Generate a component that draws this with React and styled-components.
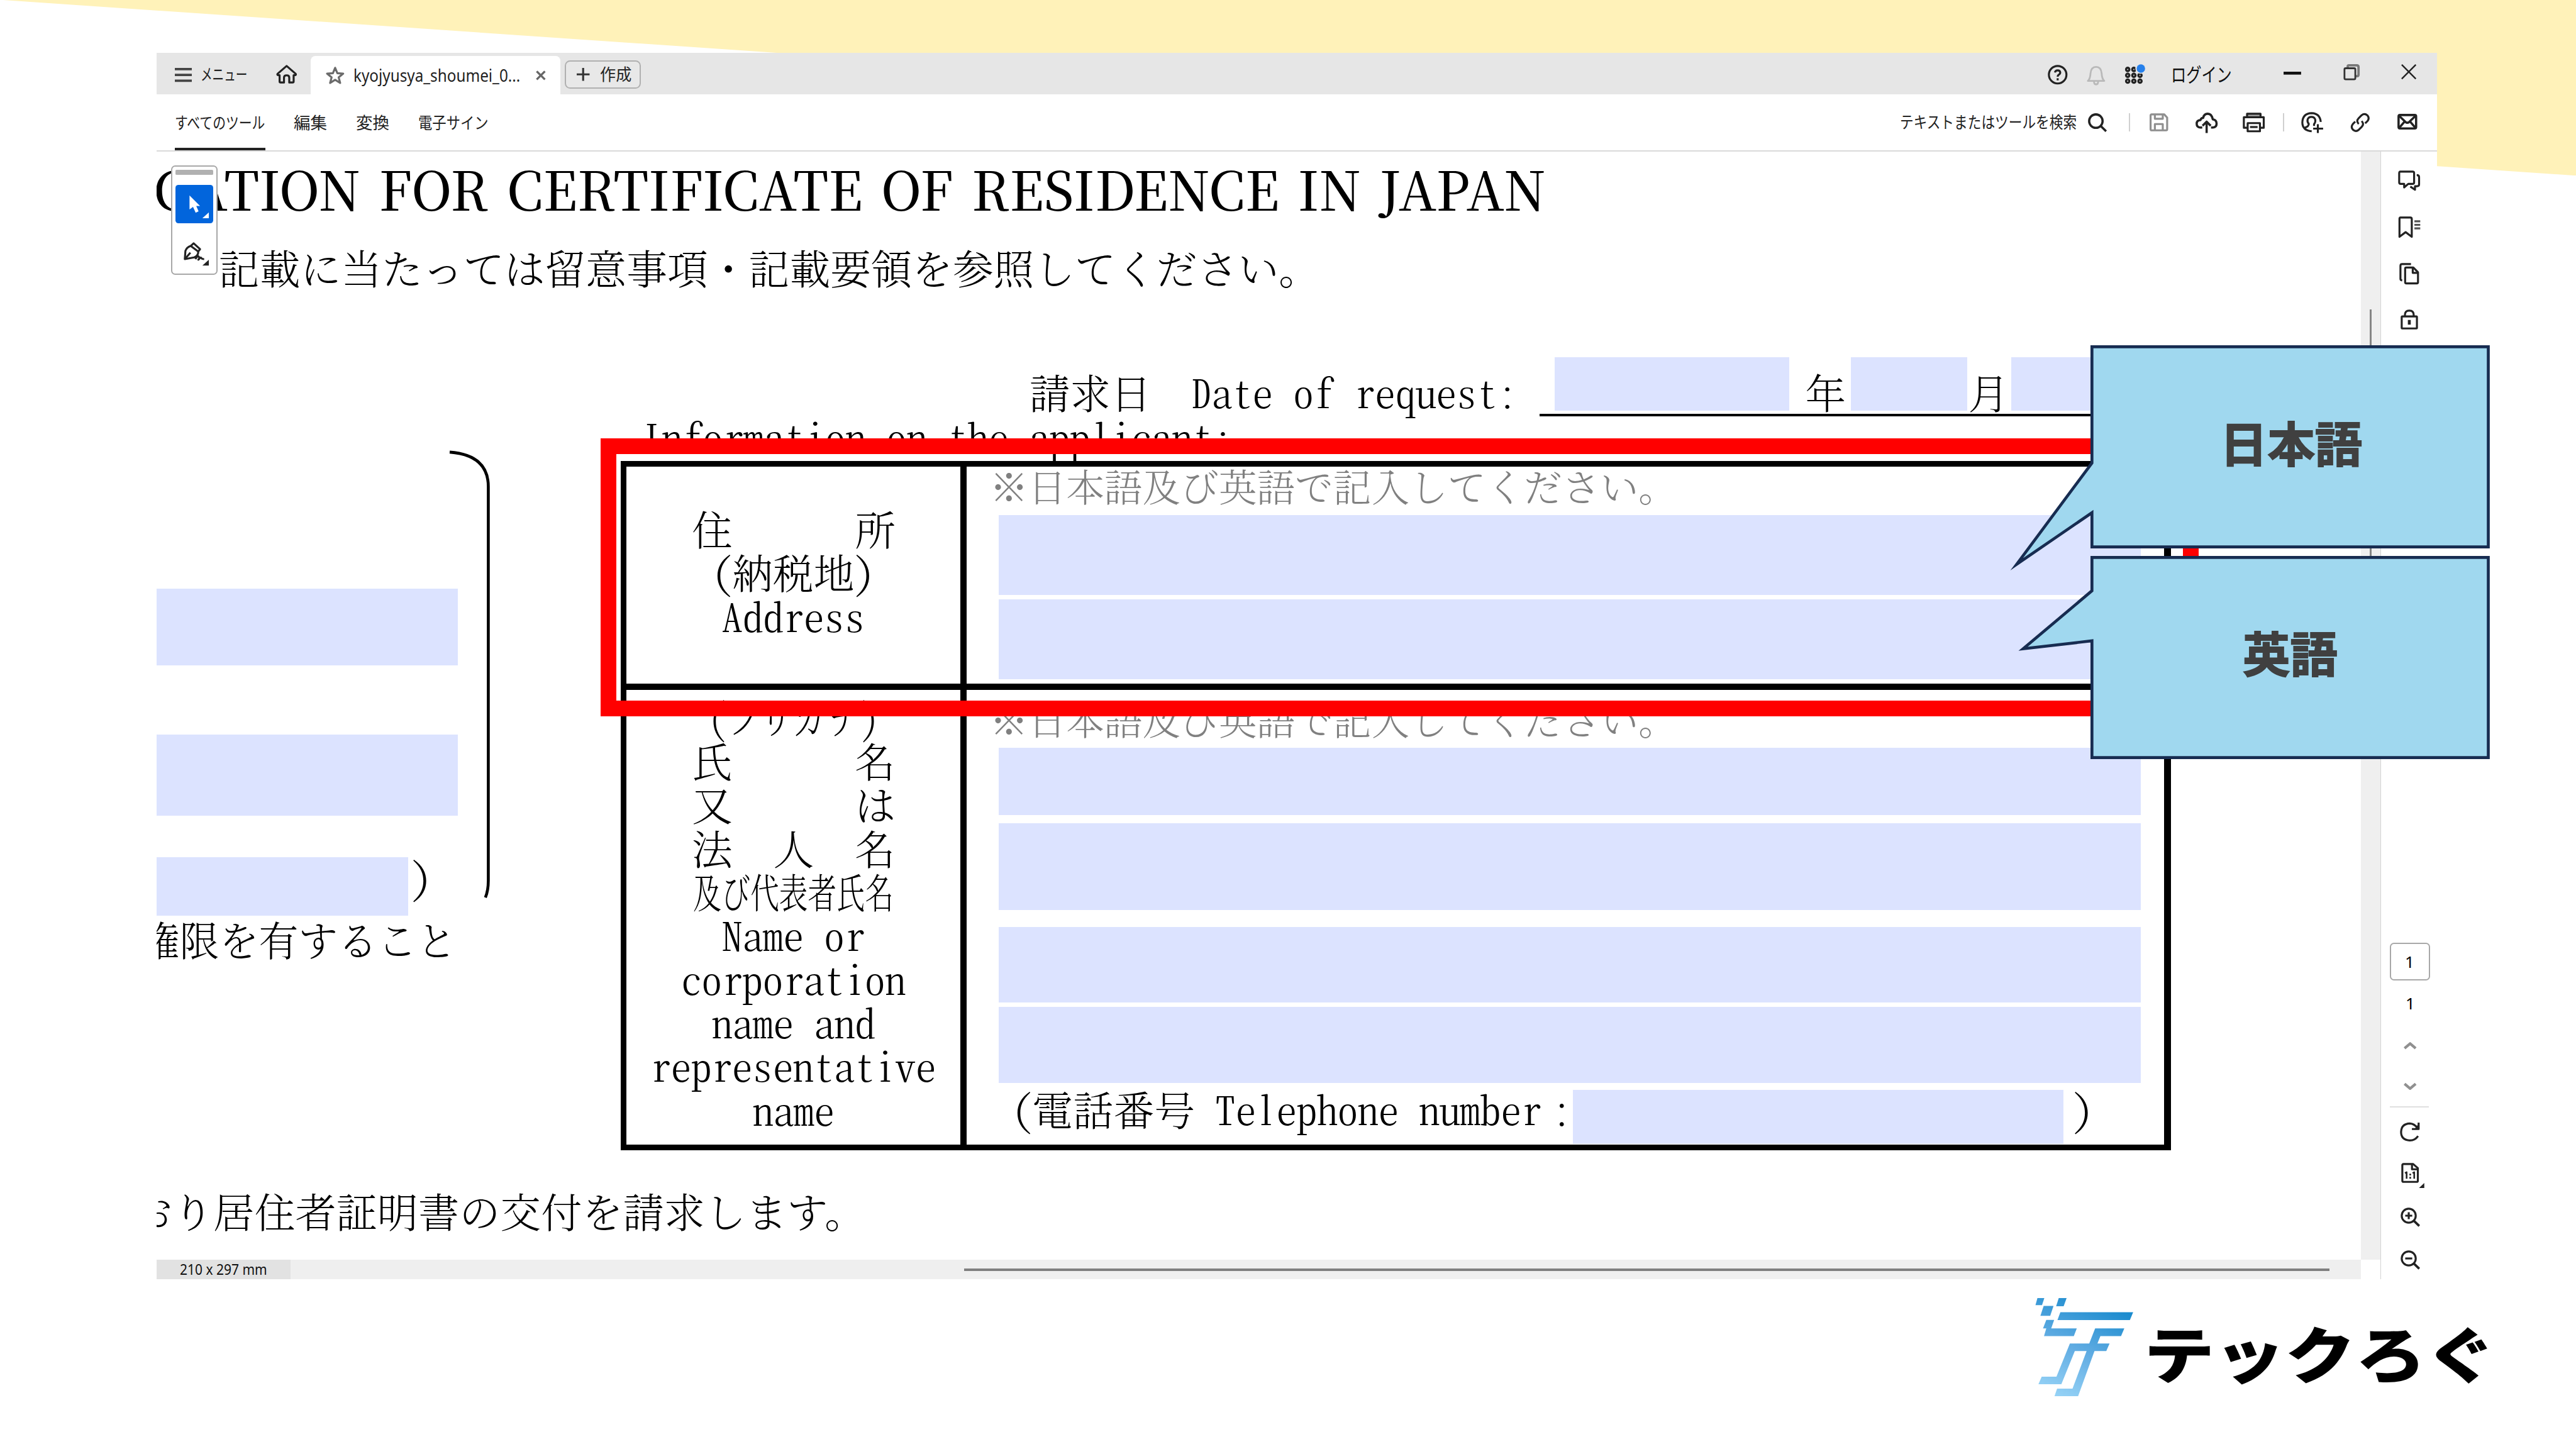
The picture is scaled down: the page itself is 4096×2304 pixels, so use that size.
import { useLayoutEffect, useRef, useState } from 'react';
import styled, { createGlobalStyle } from 'styled-components';

const MINCHO = '"Noto Serif CJK JP", "Noto Sans CJK JP", serif';
const GOTHIC = '"Noto Sans CJK JP", sans-serif';
const LATIN = '"Noto Sans", "Noto Sans CJK JP", sans-serif';

const GlobalStyle = createGlobalStyle`
    * {
        box-sizing: border-box;
    }
    body {
        margin: 0;
        background: #fff;
        overflow: hidden;
    }
`

/* slide is designed on a 4400 x 2475 board */
const Slide = styled.main`
    position: relative;
    display: flex;
    flex-direction: column;
    width: 4400px;
    height: 2475px;
    padding: 90px 0 0 267px;
    background: #fff;
    overflow: hidden;
    zoom: 0.930909;
`

const Ribbon = styled.div`
    position: absolute;
    top: 0;
    left: 0;
    width: 4400px;
    height: 300px;
    background: #fff2b9;
    clip-path: polygon(5px 0, 100% 0, 100% 100%);
`

/* ---------- text ---------- */

const FitBox = styled.span`
    display: block;
    flex: none;
    width: ${(p) => p.$w}px;
    height: ${(p) => p.$h}px;
    margin: ${(p) => p.$m || 0};
    font-family: ${(p) => p.$font || MINCHO};
    font-size: ${(p) => p.$size}px;
    font-weight: ${(p) => p.$weight || 300};
    font-feature-settings: ${(p) => (p.$half ? '"hwid"' : 'normal')};
    line-height: ${(p) => p.$h}px;
    word-spacing: ${(p) => p.$gap || 0}px;
    color: ${(p) => p.$color || '#000'};
    white-space: pre;
`

const FitInner = styled.span`
    display: inline-block;
    transform-origin: 0 50%;
`

// stretches a line of text so that it takes exactly `w`
function Fit({ w, h = 70, size = 69.5, m, font, weight, color, half, gap, children }) {
    const box = useRef(null);
    const inner = useRef(null);
    const [scale, setScale] = useState(1);

    useLayoutEffect(() => {
        inner.current.style.transform = 'none';
        const a = box.current.getBoundingClientRect().width;
        const b = inner.current.getBoundingClientRect().width;
        inner.current.style.transform = `scaleX(${a / b})`;
        setScale(a / b);
    }, [w, children]);

    return (
        <FitBox ref={box} $w={w} $h={h} $size={size} $m={m} $font={font} $weight={weight} $color={color} $half={half} $gap={gap}>
            <FitInner ref={inner} style={{ transform: `scaleX(${scale})` }}>{children}</FitInner>
        </FitBox>
    )
}

/* ---------- icons ---------- */

const Svg = styled.svg`
    display: block;
    flex: none;
    width: ${(p) => p.$w}px;
    height: ${(p) => p.$h}px;
    margin: ${(p) => p.$m || 0};
    overflow: visible;
    fill: none;
    stroke: ${(p) => p.$color || '#222'};
    stroke-width: ${(p) => p.$sw || 3.4};
    stroke-linejoin: round;
`

function Icon({ w, h, m, color, sw, children }) {
    return (
        <Svg $w={w} $h={h} $m={m} $color={color} $sw={sw} viewBox={`0 0 ${w} ${h}`}>{children}</Svg>
    )
}

const MenuIcon = (p) => (
    <Icon w={29} h={26} sw={4} color="#444" {...p}><path d="M0 3h29M0 13h29M0 23h29" /></Icon>
)
const HomeIcon = (p) => (
    <Icon w={36} h={32} {...p}>
        <path d="M18 2 2.5 15.5q-1 1.2.6 2.2H6V28.5q0 1.8 1.8 1.8H13.5V22q0-4 4.5-4t4.5 4v8.3h5.7q1.8 0 1.8-1.8V17.7h2.9q1.6-1 .6-2.2Z" />
    </Icon>
)
const StarIcon = (p) => (
    <Icon w={32} h={32} color="#6b6b6b" sw={3.4} {...p}>
        <path d="M16 3 19.8 12.2 29.8 13 22 19.3 24.6 29 16 23.6 7.4 29 10 19.3 2.2 13 12.2 12.2Z" />
    </Icon>
)
const TabCloseIcon = (p) => (
    <Icon w={17} h={17} color="#666" sw={3.6} {...p}><path d="M1.5 1.5 15.5 15.5M15.5 1.5 1.5 15.5" /></Icon>
)
const PlusIcon = (p) => (
    <Icon w={22} h={22} color="#333" {...p}><path d="M11 0v22M0 11h22" /></Icon>
)
const HelpIcon = (p) => (
    <Icon w={34} h={34} {...p}>
        <circle cx="17" cy="17" r="15" />
        <path d="M12.4 13.2Q13 9.6 17 9.6t4.4 3.6Q21.4 15.6 18.8 17 17 18 17 20.4" />
        <path d="M17 23v3.6" />
    </Icon>
)
const BellIcon = (p) => (
    <Icon w={32} h={34} color="#b9b9b9" sw={3} {...p}>
        <path d="M2 26.5Q6 23 6.5 13.5 7.5 2.5 16 2.5t9.5 11Q26 23 30 26.5Z" />
        <path d="M12.5 28q0 4.5 3.5 4.5t3.5-4.5" />
    </Icon>
)
const AppsIcon = (p) => (
    <Icon w={34} h={34} {...p}>
        {[9, 19, 29].map((y) => [4.5, 15, 25.5].map((x) => (
            <circle key={`${x}-${y}`} cx={x} cy={y} r="2.8" strokeWidth="3.6" />
        )))}
        <circle cx="26.5" cy="7.5" r="9" fill="#e6e6e6" stroke="none" />
        <circle cx="27" cy="7.5" r="7.2" fill="#2680eb" stroke="none" />
    </Icon>
)
const MinimizeIcon = (p) => (
    <Icon w={30} h={5} sw={5} color="#111" {...p}><path d="M0 2.5h30" /></Icon>
)
const RestoreIcon = (p) => (
    <Icon w={28} h={28} sw={3} color="#333" {...p}>
        <path d="M7.5 6V4q0-2 2-2H23q3 0 3 3V18q0 2.5-2.5 2.5h-2" stroke="#777" strokeWidth="4" />
        <rect x="2" y="7" width="18.5" height="19" rx="2" />
    </Icon>
)
const CloseIcon = (p) => (
    <Icon w={26} h={26} sw={2.6} {...p}><path d="M1 1 25 25M25 1 1 25" /></Icon>
)
const SearchIcon = (p) => (
    <Icon w={32} h={32} sw={3.8} {...p}><circle cx="13.5" cy="13.5" r="11.5" /><path d="M22 22 31 31" /></Icon>
)
const SaveIcon = (p) => (
    <Icon w={32} h={31} color="#8f8f8f" {...p}>
        <path d="M3.5 2H25L30 7.5V27.5q0 1.8-1.8 1.8H3.5q-1.8 0-1.8-1.8V3.8Q1.7 2 3.5 2Z" />
        <path d="M9 2v7.5h13.5V2M9 29V18.5h13.5V29" />
    </Icon>
)
const CloudIcon = (p) => (
    <Icon w={38} h={35} sw={3.8} {...p}>
        <path d="M11.5 25.5H8Q2 25 2 19t6.5-6.2Q9.5 9 13 9.2 14.5 2 21 2t8.5 9.5Q36 12.5 36 18.8T30 25.5H26.5" />
        <path d="M19 35V16M12 22.5 19 15.5 26 22.5" />
    </Icon>
)
const PrintIcon = (p) => (
    <Icon w={38} h={34} {...p}>
        <path d="M7.5 7V2h23v5" fill="#aaa" />
        <path d="M8.5 26H2V8H36V26H29.5" />
        <rect x="8.5" y="18" width="21" height="14" />
        <path d="M12.5 24.7h13" />
    </Icon>
)
const AddPersonIcon = (p) => (
    <Icon w={38} h={36} {...p}>
        <path d="M18 33Q2 31.5 2 18 2.5 2.5 18 2 32 2.5 33.5 17" />
        <path d="M6 27q7-2 7-6.5Q10 17 11 13q1.5-4.5 6.5-4.5T24 13q1 4-2 8v3" />
        <path d="M28.5 21v15M20.5 28.5h17" />
    </Icon>
)
const LinkIcon = (p) => (
    <Icon w={34} h={34} {...p}>
        <path d="M14.5 19.5Q9.5 14.5 14.5 9.5L19.5 4.5Q24.5 .5 29.3 4.7 33.5 9.5 29.5 14.5L25.5 18.5" />
        <path d="M19.5 14.5Q24.5 19.5 19.5 24.5L14.5 29.5Q9.5 33.5 4.7 29.3 .5 24.5 4.5 19.5L8.5 15.5" />
    </Icon>
)
const MailIcon = (p) => (
    <Icon w={34} h={27} sw={3.8} {...p}>
        <rect x="2" y="2" width="30" height="23" rx="2.5" />
        <path d="M3 3.5 14 14q3 2.5 6 0L31 3.5M3 24 12.5 13M31 24 21.5 13" />
    </Icon>
)
const CommentsIcon = (p) => (
    <Icon w={38} h={35} {...p}>
        <path d="M4 2H25q2.5 0 2.5 2.5V20.5Q27.5 23 25 23H17.5L10.5 29V23H4.5Q2 23 2 20.5V4.5Q2 2 4 2Z" />
        <path d="M32 8q4 0 4 3.5V24q0 3-3.5 3H29v6L21 27.5" />
    </Icon>
)
const BookmarkIcon = (p) => (
    <Icon w={38} h={37} {...p}>
        <path d="M4 2H21q2.5 0 2.5 2.5V35L13 27 2.5 35V4Q2.5 2 4 2Z" />
        <path d="M28 8.5h10M28 14.5h10M28 20.5h10" stroke="#555" />
    </Icon>
)
const PagesIcon = (p) => (
    <Icon w={34} h={37} {...p}>
        <path d="M20 2H5Q2 2 2 5V27q0 2.5 3 3" />
        <path d="M12 8H24L32 16V33q0 2-2 2H12q-2 0-2-2V10q0-2 2-2Z" />
        <path d="M23 8v9h9" />
    </Icon>
)
const LockIcon = (p) => (
    <Icon w={30} h={34} {...p}>
        <path d="M7.5 12V9.5Q7.5 2 15 2t7.5 7.5V12" />
        <rect x="2" y="12" width="26" height="20.5" rx="1" />
        <path d="M15 18v8" strokeWidth="5" />
    </Icon>
)
const ChevronIcon = ({ down, ...p }) => (
    <Icon w={22} h={12} color="#909090" sw={4.6} {...p}>
        <path d={down ? 'M1.5 1.5 11 9.5 20.5 1.5' : 'M1.5 10.5 11 2.5 20.5 10.5'} />
    </Icon>
)
const RotateIcon = (p) => (
    <Icon w={34} h={32} {...p}>
        <path d="M31 23Q26 30.5 17 30.5 2 29.5 2 16 2.5 2 17 1.5q8 .5 13 8" />
        <path d="M32 0v11H20.5" />
        <path d="M32 2v9h-7z" fill="#222" stroke="none" />
    </Icon>
)
const ActualSizeIcon = (p) => (
    <Icon w={30} h={34} {...p}>
        <path d="M4 2H20.5L28.5 9V30.5q0 2-2 2H4q-2 0-2-2V4Q2 2 4 2Z" />
        <path d="M18.5 2v9h10" />
        <path d="M6.5 17.5 9.3 16v11M19.5 17.5 22.3 16v11" strokeWidth="2.8" />
        <path d="M15.5 18.5v3M15.5 24v3" strokeWidth="2.8" />
        <path d="M30.5 43h9v-8.5z" fill="#222" stroke="none" />
    </Icon>
)
const ZoomIcon = ({ plus, ...p }) => (
    <Icon w={33} h={32} {...p}>
        <circle cx="14" cy="14" r="12" />
        <path d={plus ? 'M8 14h12M14 8v12' : 'M8 14h12'} />
        <path d="M22.5 22.5 32 31.5" strokeWidth="4" />
    </Icon>
)

/* ---------- app window ---------- */

const Window = styled.section`
    position: relative;
    display: flex;
    flex-direction: column;
    flex: none;
    width: 3896px;
    height: 2095px;
    background: #fff;
    overflow: hidden;
`

const TabBar = styled.header`
    display: flex;
    align-items: center;
    flex: none;
    height: 71px;
    padding: 4px 36px 0 32px;
    background: #e6e6e6;
`

const Tab = styled.div`
    display: flex;
    align-items: center;
    align-self: flex-end;
    width: 426px;
    height: 65px;
    margin-left: 23px;
    padding-left: 25px;
    border-radius: 8px 8px 0 0;
    background: #fff;
`

const CreateButton = styled.button`
    display: flex;
    align-items: center;
    width: 130px;
    height: 49px;
    margin-left: 8px;
    padding: 0 0 0 18px;
    border: 3px solid #b0b0b0;
    border-radius: 9px;
    background: #e8e8e8;
`

const Push = styled.div`
    flex: 1;
`

const ToolBar = styled.nav`
    display: flex;
    align-items: center;
    flex: none;
    height: 98px;
    padding: 0 34px 0 32px;
    border-bottom: 3px solid #d9d9d9;
`

const ToolTab = styled.div`
    display: flex;
    align-items: center;
    height: 95px;
    margin-right: 49px;
    padding-top: 4px;
    border-bottom: ${(p) => (p.$active ? '5px solid #222' : '5px solid transparent')};
`

const Divider = styled.i`
    width: 2px;
    height: 32px;
    margin: ${(p) => p.$m};
    background: #d0d0d0;
`

const Body = styled.div`
    display: flex;
    flex: 1;
    min-height: 0;
`

const Viewer = styled.div`
    display: flex;
    flex-direction: column;
    width: 3766px;
`

const Page = styled.div`
    display: flex;
    flex-direction: column;
    height: 1893px;
    overflow: hidden;
`

const BottomBar = styled.div`
    display: flex;
    align-items: center;
    height: 33px;
    background: #efefef;
`

const PageSize = styled.div`
    width: 229px;
    height: 33px;
    padding-left: 40px;
    background: #e2e2e2;
`

const HThumb = styled.div`
    width: 2332px;
    height: 4px;
    margin-left: 1151px;
    background: #7f7f7f;
`

const VScroll = styled.div`
    display: flex;
    flex-direction: column;
    width: 33px;
    height: 1893px;
    padding: 270px 0 0 15px;
    background: #efefef;
`

const VThumb = styled.div`
    width: 3px;
    height: 620px;
    background: #858585;
`

const Rail = styled.aside`
    display: flex;
    flex-direction: column;
    align-items: center;
    width: 97px;
    padding: 32px 0 18px;
    border-left: 2px solid #d3d3d3;
`

const PageBox = styled.div`
    display: flex;
    align-items: center;
    justify-content: center;
    width: 69px;
    height: 65px;
    margin-left: 2px;
    border: 2.4px solid #a8a8a8;
    border-radius: 7px;
`

const RailRule = styled.div`
    width: 67px;
    height: 2px;
    margin: 28px 0 25px;
    background: #e0e0e0;
`

/* floating palette over the page */
const Palette = styled.div`
    position: absolute;
    top: 193px;
    left: 25px;
    display: flex;
    flex-direction: column;
    align-items: center;
    width: 80px;
    height: 186px;
    padding-top: 5px;
    border: 2.4px solid #a8a8a8;
    border-radius: 7px;
    background: #fff;
`

const Grip = styled.div`
    width: 64px;
    height: 8px;
    border-radius: 2px;
    background: #b1b1b1;
`

const ToolButton = styled.div`
    display: flex;
    width: 64px;
    height: 65px;
    margin-top: ${(p) => p.$mt}px;
    border-radius: 5px;
    background: ${(p) => (p.$active ? '#0265dc' : 'transparent')};
`

/* ---------- pdf page ---------- */

const Columns = styled.div`
    display: flex;
    height: 1470px;
`

const LeftColumn = styled.div`
    display: flex;
    flex-direction: column;
    flex: none;
    width: 501px;
    padding-top: 512px;
`

const RightColumn = styled.div`
    display: flex;
    flex-direction: column;
    width: 2648px;
    margin-left: 222px;
`

const Row = styled.div`
    display: flex;
    flex: none;
    align-items: flex-start;
`

const Field = styled.div`
    flex: none;
    width: ${(p) => p.$w || 1951}px;
    height: ${(p) => p.$h}px;
    margin: ${(p) => p.$m || 0};
    background: #dce3ff;
`

const DateRow = styled.div`
    display: flex;
    align-items: flex-start;
    height: 101px;
    margin-top: 116px;
    padding-left: 699px;
`

const DateInputs = styled.div`
    display: flex;
    width: 1078px;
    height: 101px;
    margin-left: 37px;
    padding-left: 26px;
    border-bottom: 5px solid #000;
`

const FormTable = styled.div`
    display: grid;
    grid-template-columns: 571px 2046px;
    grid-template-rows: 371px 776px;
    gap: 11px 10px;
    flex: none;
    width: 2648px;
    height: 1178px;
    margin-top: 7px;
    border: 10px solid #000;
    border-right-width: 11px;
    background: #000;
`

const HeadCell = styled.div`
    display: flex;
    flex-direction: column;
    align-items: center;
    padding-top: ${(p) => p.$pt}px;
    background: #fff;
`

const InputCell = styled.div`
    display: flex;
    flex-direction: column;
    padding: ${(p) => p.$pt}px 0 0 55px;
    background: #fff;
`

/* ---------- annotations ---------- */

const RedFrame = styled.div`
    position: absolute;
    top: 749px;
    left: 1026px;
    width: 2730px;
    height: 475px;
    border: 27px solid #f00;
`

const Callout = styled.div`
    position: absolute;
    top: ${(p) => p.$top}px;
    left: 3571px;
    display: flex;
    align-items: center;
    justify-content: center;
    width: 682px;
    height: 347px;
    -webkit-text-stroke: 2px #404040;
`

const CalloutShape = styled.svg`
    position: absolute;
    top: 0;
    left: 0;
    width: 682px;
    height: 347px;
    overflow: visible;
    fill: #a0d8ef;
    stroke: #172c51;
    stroke-width: 5;
    stroke-miterlimit: 20;
`

const Brand = styled.footer`
    display: flex;
    margin: 32px 0 0 3209px;
`

const Mark = styled.svg`
    width: 168px;
    height: 168px;
`

const note = '※日本語及び英語で記入してください。';
const PITCH = 34.85;

// half-width line of the form, every letter takes one PITCH
const Half = ({ children, h = 74.5, m }) => (
    <Fit half w={children.length * PITCH} h={h} size={65.5} m={m}>{children}</Fit>
)

function LeftFields() {
    return (
        <LeftColumn>
            <Field $w={515} $h={131} />
            <Field $w={515} $h={138} $m="118px 0 0" />
            <Row>
                <Field $w={430} $h={100} $m="71px 0 0" />
                <Fit half w={35} m="69px 0 0 6px">)</Fit>
            </Row>
            <Fit w={540} m="5px 0 0 -27px">権限を有すること</Fit>
        </LeftColumn>
    )
}

function Applicant() {
    return (
        <RightColumn>
            <DateRow>
                <Fit w={208} m="24px 68px 0 0">請求日</Fit>
                <Half h={70} m="24px 0 0">Date of request:</Half>
                <DateInputs>
                    <Field $w={401} $h={91} />
                    <Fit w={69.5} m="24px 0 0 27px">年</Fit>
                    <Field $w={199} $h={91} $m="0 0 0 8px" />
                    <Fit w={69.5} m="24px 0 0 2px">月</Fit>
                    <Field $w={200} $h={91} $m="0 0 0 4px" />
                </DateInputs>
            </DateRow>
            <Half h={70} m="-1px 0 0 36px">Information on the applicant:</Half>
            <FormTable>
                <HeadCell $pt={68}>
                    <Fit w={348} h={74.5}>住　　　所</Fit>
                    <Fit half w={278} h={74.5}>(納税地)</Fit>
                    <Half>Address</Half>
                </HeadCell>
                <InputCell $pt={0}>
                    <Fit w={1173} h={66} size={65.5} m="-1px 0 0 -15px" color="#808080">{note}</Fit>
                    <Field $h={137} $m="18px 0 0" />
                    <Field $h={137} $m="7px 0 0" />
                </InputCell>
                <HeadCell $pt={8}>
                    <Fit half w={290} h={74.5}>(フリガナ)</Fit>
                    <Fit w={348} h={74.5}>氏　　　名</Fit>
                    <Fit w={348} h={74.5}>又　　　は</Fit>
                    <Fit w={348} h={74.5}>法　人　名</Fit>
                    <Fit w={343} h={74.5}>及び代表者氏名</Fit>
                    <Half>Name or</Half>
                    <Half>corporation</Half>
                    <Half>name and</Half>
                    <Half>representative</Half>
                    <Half>name</Half>
                </HeadCell>
                <InputCell $pt={16}>
                    <Fit w={1173} h={66} size={65.5} m="0 0 0 -15px" color="#808080">{note}</Fit>
                    <Field $h={115} $m="17px 0 0" />
                    <Field $h={148} $m="14px 0 0" />
                    <Field $h={129} $m="29px 0 0" />
                    <Field $h={130} $m="7px 0 0" />
                    <Row>
                        <Fit half w={313} m="9px 32px 0 23px">(電話番号</Fit>
                        <Half h={70} m="9px 0 0 2px">Telephone number</Half>
                        <Fit half w={35} m="9px 0 0 17px">:</Fit>
                        <Field $w={838} $h={93} $m="12px 0 0 1px" />
                        <Fit half w={35} m="9px 0 0 16px">)</Fit>
                    </Row>
                </InputCell>
            </FormTable>
        </RightColumn>
    )
}

function AppWindow() {
    return (
        <Window>
            <TabBar>
                <MenuIcon />
                <Fit w={80} h={40} size={28} m="-3px 49px 0 15px" font={GOTHIC} weight={400} color="#222">メニュー</Fit>
                <HomeIcon m="-1px 0 0" />
                <Tab>
                    <StarIcon />
                    <Fit w={285} h={40} size={29} m="0 26px 0 16px" font={LATIN} weight={400} color="#222">kyojyusya_shoumei_0...</Fit>
                    <TabCloseIcon />
                </Tab>
                <CreateButton>
                    <PlusIcon />
                    <Fit w={54} h={40} size={28} m="-3px 0 0 18px" font={GOTHIC} weight={400} color="#222">作成</Fit>
                </CreateButton>
                <Push />
                <HelpIcon />
                <BellIcon m="2px 0 0 32px" />
                <AppsIcon m="-2px 0 0 34px" />
                <Fit w={104} h={44} size={33} m="-2px 0 0 44px" font={GOTHIC} weight={400} color="#111">ログイン</Fit>
                <MinimizeIcon m="-6px 0 0 88px" />
                <RestoreIcon m="-8px 0 0 72px" />
                <CloseIcon m="-9px 0 0 71px" />
            </TabBar>
            <ToolBar>
                <ToolTab $active><Fit w={154} h={40} size={28} font={GOTHIC} weight={400} color="#222">すべてのツール</Fit></ToolTab>
                <ToolTab><Fit w={57} h={40} size={28} font={GOTHIC} weight={400} color="#222">編集</Fit></ToolTab>
                <ToolTab><Fit w={57} h={40} size={28} font={GOTHIC} weight={400} color="#222">変換</Fit></ToolTab>
                <ToolTab><Fit w={120} h={40} size={28} font={GOTHIC} weight={400} color="#222">電子サイン</Fit></ToolTab>
                <Push />
                <Fit w={302} h={40} size={28} m="-2px 19px 0 0" font={GOTHIC} weight={400} color="#222">テキストまたはツールを検索</Fit>
                <SearchIcon />
                <Divider $m="0 34px 0 38px" />
                <SaveIcon />
                <CloudIcon m="2px 43px 0 46px" />
                <PrintIcon />
                <Divider $m="0 30px" />
                <AddPersonIcon />
                <LinkIcon m="0 47px 0 45px" />
                <MailIcon m="-3px 0 0" />
            </ToolBar>
            <Body>
                <Viewer>
                    <Page>
                        <Fit w={2378} h={100} size={92} weight={500} gap={9} m="11px 0 0 -5px">CATION FOR CERTIFICATE OF RESIDENCE IN JAPAN</Fit>
                        <Fit w={1880} m="51px 0 3px 107px">記載に当たっては留意事項・記載要領を参照してください。</Fit>
                        <Columns>
                            <LeftFields />
                            <Icon w={70} h={765} m="275px 0 0" color="#000" sw={5}>
                                <path d="M0 3Q66 8 66 62V735Q66 752 61 764" />
                            </Icon>
                            <Applicant />
                        </Columns>
                        <Fit w={1254} m="69px 0 0 -42px">おり居住者証明書の交付を請求します。</Fit>
                    </Page>
                    <BottomBar>
                        <PageSize>
                            <Fit w={149} h={32} size={26} font={LATIN} weight={400} color="#111">210 x 297 mm</Fit>
                        </PageSize>
                        <HThumb />
                    </BottomBar>
                </Viewer>
                <VScroll><VThumb /></VScroll>
                <Rail>
                    <CommentsIcon />
                    <BookmarkIcon m="44px 0 0" />
                    <PagesIcon m="42px 0 0" />
                    <LockIcon m="43px 0 0" />
                    <Push />
                    <PageBox><Fit w={16} h={40} size={28} font={LATIN} weight={400}>1</Fit></PageBox>
                    <Fit w={16} h={40} size={28} m="19px 0 0 3px" font={LATIN} weight={400}>1</Fit>
                    <ChevronIcon m="46px 0 0 3px" />
                    <ChevronIcon down m="58px 0 0 3px" />
                    <RailRule />
                    <RotateIcon m="0 0 0 3px" />
                    <ActualSizeIcon m="37px 0 0 3px" />
                    <ZoomIcon plus m="42px 0 0 3px" />
                    <ZoomIcon m="41px 0 0 3px" />
                </Rail>
            </Body>
            <Palette>
                <Grip />
                <ToolButton $active $mt={18}>
                    <Icon w={64} h={65}>
                        <path d="M24 18V42L30 37.5 34.5 47.5 39.5 45 35.5 36H42Z" fill="#fff" stroke="none" />
                        <path d="M46 57H57V47Z" fill="#fff" stroke="none" />
                    </Icon>
                </ToolButton>
                <ToolButton $mt={18}>
                    <Icon w={64} h={65} sw={3.4}>
                        <path d="M16 43 17 29Q19 23 26 20.5L31 16 42 26 39 30Q39 37 32 40Z" />
                        <path d="M26 20.5 39 30M16 43 25.5 32" />
                        <path d="M34 43Q38 36 40 39T39 44Q43 39 44 41T49 43" />
                        <path d="M46 54H57V44Z" fill="#222" stroke="none" />
                    </Icon>
                </ToolButton>
            </Palette>
        </Window>
    )
}

export default function App() {
    return (
        <>
        <GlobalStyle />
        <Slide>
            <Ribbon />
            <AppWindow />
            <Brand>
                <Mark viewBox="100 110 300 505" preserveAspectRatio="none">
                    <defs>
                        <linearGradient id="mark" x1="110" y1="600" x2="400" y2="200" gradientUnits="userSpaceOnUse">
                            <stop offset="0" stopColor="#9bd6f8" />
                            <stop offset="0.5" stopColor="#62ade3" />
                            <stop offset="1" stopColor="#1b8bce" />
                        </linearGradient>
                    </defs>
                    <g fill="url(#mark)">
                        <path d="M107 110H128L121 146H101Z" />
                        <path d="M172 110H196L187 152H164Z" />
                        <path d="M126 150H156L146 201H116Z" />
                        <path d="M177 183H399L389 223H168Z" />
                        <path d="M134 222H158L149 266H227L218 305H127L134 266H124Z" />
                        <path d="M283 266H372L362 305H299L290 343H327L317 382H281L231 614H159L167 575H214L257 382H221L180 552H110L120 514H165L206 343H265Z" />
                    </g>
                </Mark>
                <Fit w={602} h={120} size={104} m="32px 0 0 18px" font={GOTHIC} weight={900}>テックろぐ</Fit>
            </Brand>
            <RedFrame />
            <Callout $top={590}>
                <CalloutShape viewBox="0 0 682 347">
                    <path d="M2.5 2.5H679.5V344.5H2.5V286L-126 374 2.5 201Z" />
                </CalloutShape>
                <Fit w={243} h={120} size={82} m="-20px 0 0 4px" font={GOTHIC} weight={700} color="#404040">日本語</Fit>
            </Callout>
            <Callout $top={950}>
                <CalloutShape viewBox="0 0 682 347">
                    <path d="M2.5 2.5H679.5V344.5H2.5V145L-115 158.5 2.5 59.5Z" />
                </CalloutShape>
                <Fit w={162} h={120} size={82} m="-22px 0 0 0" font={GOTHIC} weight={700} color="#404040">英語</Fit>
            </Callout>
        </Slide>
        </>
    )
}
